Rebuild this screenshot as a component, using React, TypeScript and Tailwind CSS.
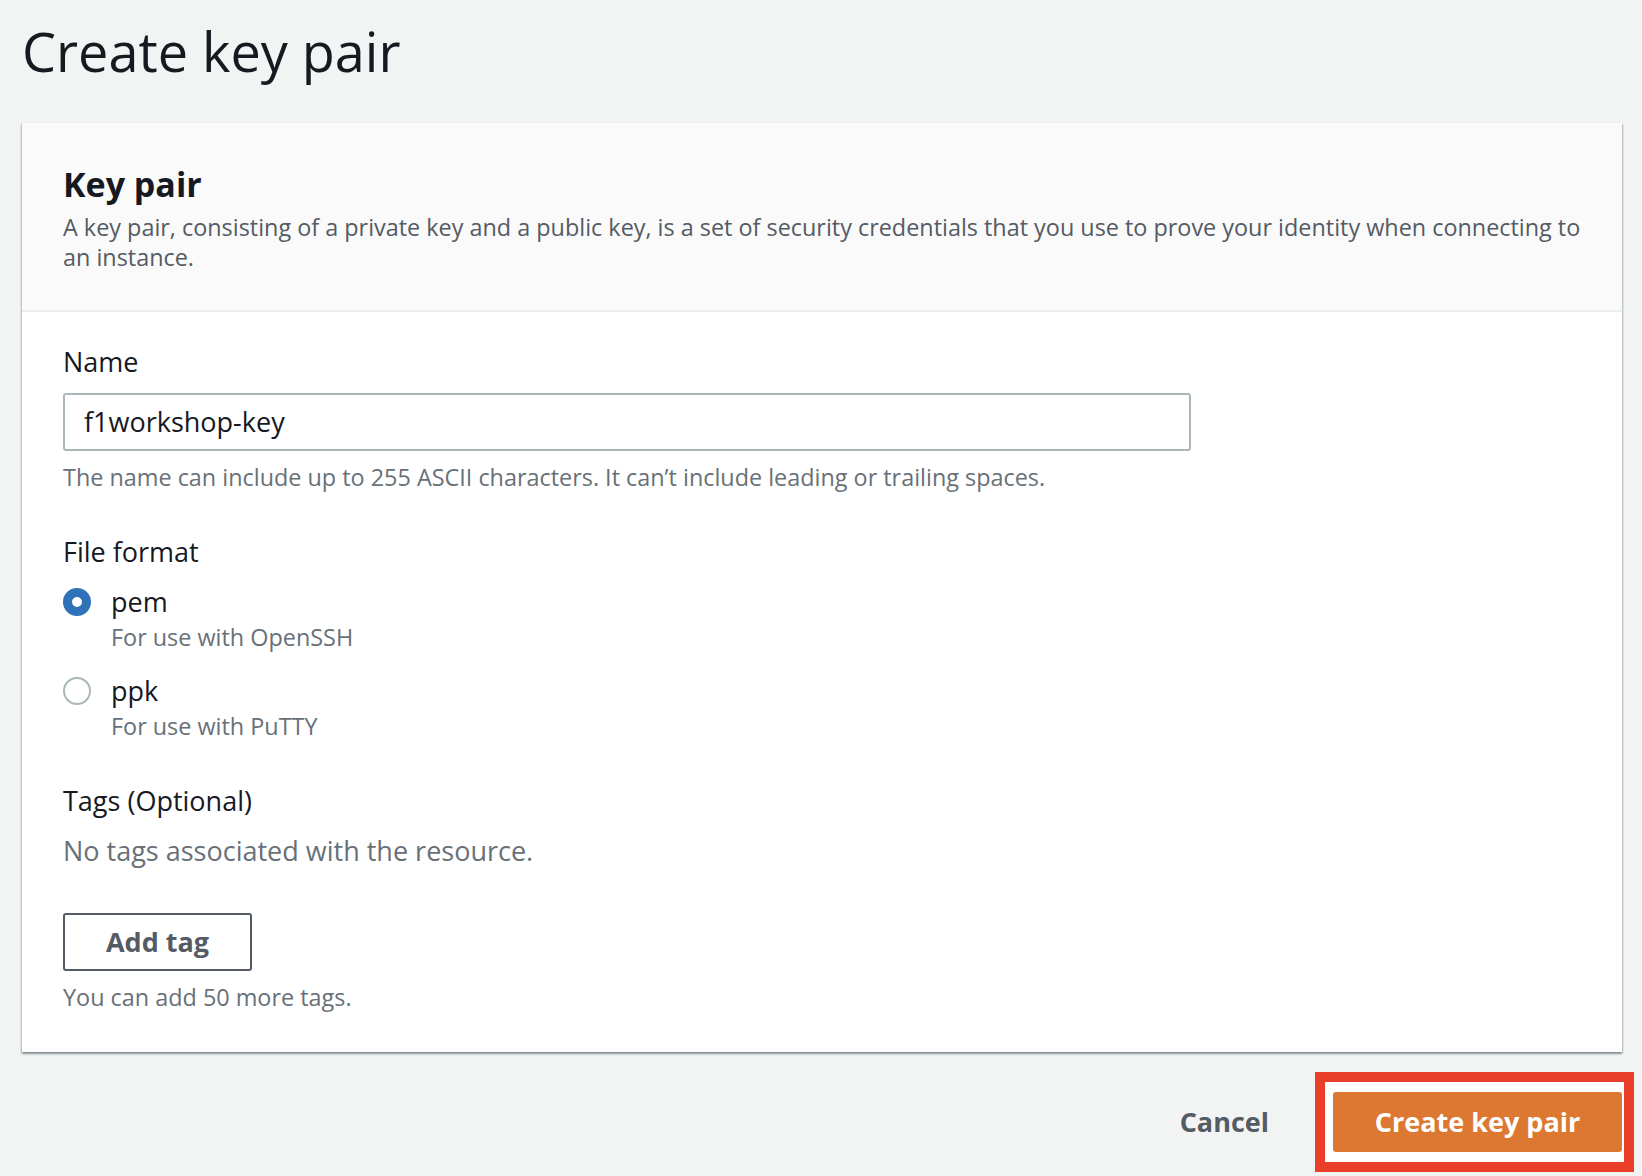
export default function App() {
  return (
    <div
      className="min-h-screen bg-[#f2f3f3] pl-[22px] pr-[20px] pt-[19px] text-[#16191f]"
      style={{ fontFamily: '"Open Sans", "Noto Sans", sans-serif' }}
    >
      <h1 className="text-[54px] leading-[64px] font-normal text-[#16191f]">Create key pair</h1>

      <div className="mt-[40px] bg-white shadow-[0_2px_2px_rgba(0,28,36,0.35),1px_1px_2px_rgba(0,28,36,0.15),-1px_1px_2px_rgba(0,28,36,0.15)]">
        <div className="border-b-2 border-[#eaeded] bg-[#fafafa] pt-[41px] pb-[38px] pl-[41px] pr-[36px]">
          <h2 className="text-[34px] leading-[40px] font-bold">Key pair</h2>
          <p className="mt-[8px] text-[23.4px] leading-[30px] text-[#545b64]">
            A key pair, consisting of a private key and a public key, is a set of security credentials that you use to
            prove your identity when connecting to an instance.
          </p>
        </div>

        <div className="pt-[33px] pb-[40px] pl-[41px] pr-[41px]">
          <label className="block text-[27px] leading-[34px]">Name</label>
          <div className="mt-[14px] flex h-[58px] w-[1128px] items-center rounded-[3px] border-2 border-[#aab7b8] pl-[19px] text-[27px]">
            f1workshop-key
          </div>
          <p className="mt-[11px] text-[23.4px] leading-[30px] text-[#687078]">
            The name can include up to 255 ASCII characters. It can’t include leading or trailing spaces.
          </p>

          <div className="mt-[43px] text-[27px] leading-[34px]">File format</div>

          <div className="mt-[16px] flex">
            <div className="flex h-[34px] w-[48px] items-center">
              <span className="h-[28px] w-[28px] rounded-full border-[9px] border-[#2f72b7] bg-white" />
            </div>
            <div>
              <div className="text-[27px] leading-[34px]">pem</div>
              <div className="mt-[3px] text-[23.4px] leading-[30px] text-[#687078]">For use with OpenSSH</div>
            </div>
          </div>

          <div className="mt-[22px] flex">
            <div className="flex h-[34px] w-[48px] items-center">
              <span className="h-[28px] w-[28px] rounded-full border-2 border-[#aab7b8] bg-white" />
            </div>
            <div>
              <div className="text-[27px] leading-[34px]">ppk</div>
              <div className="mt-[3px] text-[23.4px] leading-[30px] text-[#687078]">For use with PuTTY</div>
            </div>
          </div>

          <div className="mt-[43px] text-[27px] leading-[34px]">Tags (Optional)</div>
          <p className="mt-[16px] text-[27px] leading-[34px] text-[#687078]">No tags associated with the resource.</p>

          <button className="mt-[45px] flex h-[58px] w-[189px] items-center justify-center rounded-[3px] border-2 border-[#545b64] bg-white text-[27px] leading-[34px] font-bold text-[#545b64]">
            Add tag
          </button>
          <p className="mt-[11px] text-[23.4px] leading-[30px] text-[#687078]">You can add 50 more tags.</p>
        </div>
      </div>

      <div className="mt-[20px] flex items-center justify-end gap-[46px]">
        <span className="text-[27px] leading-[34px] font-bold text-[#545b64]">Cancel</span>
        <div className="mr-[-12px] border-[10px] border-[#e93f28] bg-white pt-[10px] pb-[10px] pl-[8px] pr-[2px]">
          <button className="flex h-[60px] w-[289px] items-center justify-center rounded-[3px] bg-[#dd7832] text-[27px] leading-[34px] font-bold text-white">
            Create key pair
          </button>
        </div>
      </div>
    </div>
  );
}
